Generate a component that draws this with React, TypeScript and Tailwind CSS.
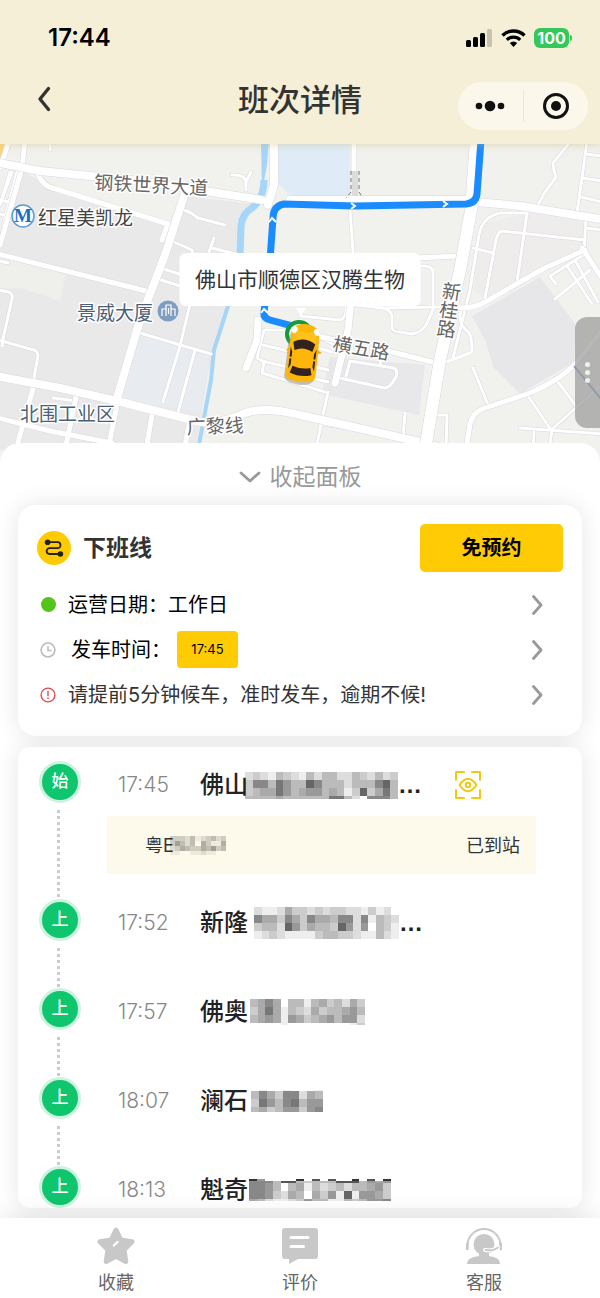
import { useState } from 'react';
import type { ReactNode } from 'react';

type MosaicRow = { h: number; tones: string };

type Stop = {
  badge: string;
  time: string;
  name: string;
  mask: MosaicRow[];
  maskClass: string;
  truncated?: boolean;
  watch?: boolean;
  bus?: boolean;
};

const stops: Stop[] = [
  {
    badge: '始',
    time: '17:45',
    name: '佛山',
    maskClass: '-ml-[3px] w-[153px]',
    truncated: true,
    watch: true,
    bus: true,
    mask: [
      { h: 8, tones: 'dcdebcdebdbbddbcdbdc' },
      { h: 8, tones: 'c88b79bb68bbbdbbb86b' },
      { h: 8, tones: 'cbaa79ba99babec6ca7b' },
      { h: 3, tones: 'bbbbabbbbbb77bdf888b' },
    ],
  },
  {
    badge: '上',
    time: '17:52',
    name: '新隆',
    maskClass: 'ml-[6px] w-[145px]',
    truncated: true,
    mask: [
      { h: 8, tones: 'deedaccdcdccddecedf' },
      { h: 8, tones: '8aac8ac8aab88d8ebcd' },
      { h: 8, tones: 'cbbd69cabbc69d9fbce' },
      { h: 8, tones: 'edcdeeeecbbccdeebde' },
    ],
  },
  {
    badge: '上',
    time: '17:57',
    name: '佛奥',
    maskClass: 'ml-[2px] w-[115px]',
    mask: [
      { h: 8, tones: 'ba8afbbebacbdac' },
      { h: 8, tones: 'ca7aebcdacbba9b' },
      { h: 8, tones: 'ba9ae9acba9b99d' },
      { h: 2, tones: 'ffffeffffffffec' },
    ],
  },
  {
    badge: '上',
    time: '18:07',
    name: '澜石',
    maskClass: 'ml-[3px] w-[72px]',
    mask: [
      { h: 1, tones: 'feffefffe' },
      { h: 8, tones: 'b8ac88dab' },
      { h: 8, tones: 'c79b87b99' },
      { h: 5, tones: 'bacb99c98' },
    ],
  },
  {
    badge: '上',
    time: '18:13',
    name: '魁奇',
    maskClass: 'ml-[1px] w-[142px]',
    mask: [
      { h: 2, tones: '39ffff3f5f5ff3f5f3' },
      { h: 2, tones: '888b55bcbbb555b9a9' },
      { h: 8, tones: '889bfbaebdcbdbba9c' },
      { h: 8, tones: '889cdabfac9e6e99ac' },
      { h: 2, tones: 'abdeedc9bbeebcb998' },
    ],
  },
];

const plateMask: MosaicRow[] = [
  { h: 5, tones: 'cccdbedcbdc' },
  { h: 5, tones: 'c9bdbfaceea' },
  { h: 5, tones: 'dcabccab9cb' },
  { h: 4, tones: 'eeffeedeeff' },
];

// '0' is the darkest tone, 'f' is fully transparent
const Mosaic = ({ rows, className }: { rows: MosaicRow[]; className: string }) => {
  const height = rows.reduce((sum, row) => sum + row.h, 0);
  const width = rows[0].tones.length * 8;
  let y = 0;

  return (
    <svg
      viewBox={`0 0 ${width} ${height}`}
      height={height}
      preserveAspectRatio="none"
      shapeRendering="crispEdges"
      className={`shrink-0 ${className}`}
      aria-hidden="true"
    >
      {rows.map((row, r) => {
        const top = y;
        y += row.h;
        return row.tones
          .split('')
          .map((tone, c) => (
            <rect
              key={`${r}-${c}`}
              x={c * 8}
              y={top}
              width={8}
              height={row.h}
              fill="#000"
              fillOpacity={1 - parseInt(tone, 16) / 15}
            />
          ));
      })}
    </svg>
  );
};

const Chevron = () => (
  <svg width="12" height="20" viewBox="0 0 12 20" fill="none">
    <path
      d="M2.5 1.5 10 10 2.5 18.5"
      stroke="#999"
      strokeWidth="2.8"
      strokeLinecap="round"
      strokeLinejoin="round"
    />
  </svg>
);

const Header = () => (
  <header className="relative z-10 bg-[#f6efd7] pb-2 shadow-[0_0_8px_rgba(200,180,110,0.5)]">
    <div className="flex h-[76px] items-center justify-between pr-7 pl-12">
      <span className="text-[24px] font-semibold text-black">17:44</span>
      <div className="flex items-center gap-2">
        <svg width="27" height="20" viewBox="0 0 27 20">
          <rect x="0" y="12" width="5" height="7" rx="1.5" fill="#000" />
          <rect x="7" y="9" width="5" height="10" rx="1.5" fill="#000" />
          <rect x="14" y="5" width="5" height="14" rx="1.5" fill="#000" />
          <rect x="21" y="1" width="5" height="18" rx="1.5" fill="#c9c3ae" />
        </svg>
        <svg width="25" height="18" viewBox="0 0 25 18" fill="none" stroke="#000">
          <path d="M1.5 6.5a15.6 15.6 0 0 1 22 0" strokeWidth="3.4" />
          <path d="M5.8 10.8a9.6 9.6 0 0 1 13.4 0" strokeWidth="3.2" />
          <path d="M12.5 18 8.8 14.1a5.3 5.3 0 0 1 7.4 0Z" fill="#000" stroke="none" />
        </svg>
        <div className="flex items-center gap-px">
          <span className="flex h-5 w-[35px] items-center justify-center rounded-[6px] bg-[#34c759] text-base font-bold text-white">
            100
          </span>
          <span className="h-[6px] w-[2px] rounded-r bg-[#34c759]" />
        </div>
      </div>
    </div>

    <div className="grid h-[60px] grid-cols-[1fr_auto_1fr] items-start px-3">
      <button aria-label="返回" className="ml-5 flex h-12 w-6 items-center justify-center">
        <svg width="16" height="28" viewBox="0 0 16 28" fill="none">
          <path
            d="M12.5 2.5 4 13 12.5 23.5"
            stroke="#333"
            strokeWidth="3.4"
            strokeLinecap="round"
            strokeLinejoin="round"
          />
        </svg>
      </button>
      <h1 className="flex h-12 items-center text-[31px] font-medium text-[#333]">
        班次详情
      </h1>
      <div className="mt-[6px] flex h-12 w-[130px] items-center justify-self-end rounded-full bg-[#fbf8eb]">
        <button aria-label="更多" className="flex flex-1 justify-center">
          <svg width="30" height="14" viewBox="0 0 30 14" fill="#111">
            <circle cx="4" cy="7" r="3.3" />
            <circle cx="15" cy="7" r="5.3" />
            <circle cx="26" cy="7" r="3.3" />
          </svg>
        </button>
        <span className="h-8 w-px bg-[#ebe7d8]" />
        <button aria-label="关闭" className="flex flex-1 justify-center">
          <svg width="28" height="28" viewBox="0 0 28 28">
            <circle cx="14" cy="14" r="11.5" fill="none" stroke="#111" strokeWidth="3" />
            <circle cx="14" cy="14" r="5" fill="#111" />
          </svg>
        </button>
      </div>
    </div>
  </header>
);

const wideRoads = [
  'M-5 162 40 171 140 181 262 200',
  'M-5 376 60 388 117 401 200 422 Q222 424 245 413 Q265 406 300 415 L420 442 450 450',
  'M184 196 165 255 140 320 115 405',
  'M274 140V185L268 205',
  'M290 200H465',
  'M474 140 470 195',
  'M476 202 520 206 600 219',
];

const midRoads = [
  'M25 140 22 168 0 245',
  'M8 144 0 168',
  'M38 174Q42 186 56 189L168 224 162 240',
  'M-2 254 146 291',
  'M585 250 545 268 485 302 Q475 308 461 308',
  'M582 248 602 278',
  'M604 328 575 364Q560 380 530 393L482 409Q472 414 470 424L466 450',
  'M354 140V170',
  'M388 351 436 363',
  'M298 332 336 340',
  'M34 385 18 442',
  'M76 397 65 450',
  'M118 400 108 450',
  'M152 415 146 450',
  'M190 420 184 450',
  'M-2 418 50 431 112 443',
  'M416 258 458 256',
];

const thinRoads = [
  'M50 144V150',
  'M12 172 0 205M17 172 3 226M10 172 2 198',
  'M0 200 14 203M0 214 12 217',
  'M180 209Q188 210 198 218L225 225',
  'M232 175Q245 174 246 182V190M246 182 251 172',
  'M172 241 192 250 194 262',
  'M161 268 182 275M158 279 180 286',
  'M214 238 209 252M212 248 236 254',
  'M0 261 8 263',
  'M-2 290 9 292Q13 294 12 299L3 339 2 346',
  'M-2 340 34 350Q38 352 38 356L34 378',
  'M140 333 211 354',
  'M191 300 180 346 163 402M195 350 178 412',
  'M53 398 76 401',
  'M350 210 355 280',
  'M300 316 340 320Q346 318 346 310V300',
  'M355 305 375 307Q391 308 392 316V328Q393 332 400 332L412 334Q422 332 426 325L433 310V272Q432 266 424 266H420',
  'M376 308 440 307',
  'M570 142 553 163 Q553 170 556 177L545 192 538 205',
  'M587 142 577 213M585 154 602 156M583 178 602 181M581 197 602 202',
  'M586 218 584 252M586 228 602 230',
  'M527 213H500Q482 217 479 235L470 290 453 358',
  'M527 213 517 282M585 240 502 231Q498 232 496 240L485 298M473 248 493 253',
  'M461 310Q458 320 464 328L468 332Q472 335 472 352 458 358 440 364',
  'M473 368 489 407',
  'M264 330H290M264 330 257 358 264 362 262 373 325 392',
  'M263 345 292 352M262 361 292 368',
  'M312 334 335 345M318 348 332 352M312 366 328 370M312 378 328 382',
  'M346 376 350 361 394 368Q400 372 394 380 390 388 384 388L340 378M381 356 380 366',
  'M328 392 321 424 316 450',
  'M321 424 404 436',
  'M405 413 403 438',
  'M437 415H447L446 450',
  'M555 378 577 407M528 396 551 430 604 383M520 428 604 434M552 430 549 450M534 432 533 450',
  'M556 284 550 276 585 254M555 299 590 270M567 266 592 304M575 260 598 302',
];

const Roads = ({ list, width }: { list: string[]; width: number }) => (
  <g fill="none" strokeLinecap="round" strokeLinejoin="round">
    {list.map((d) => (
      <path key={`edge-${d}`} d={d} stroke="#d8d8e0" strokeWidth={width + 1} />
    ))}
    {list.map((d) => (
      <path key={d} d={d} stroke="#fff" strokeWidth={width} />
    ))}
  </g>
);

const RouteMap = () => (
  <div className="relative">
    <svg
      viewBox="0 144 600 320"
      preserveAspectRatio="xMidYMin slice"
      className="h-[320px] w-full"
      role="img"
      aria-label="线路地图"
    >
      <rect x="-10" y="140" width="620" height="330" fill="#f1f1ee" />
      <path d="M20 170 58 190 170 225 185 196 252 204 238 250 226 320 208 372 196 450H-5V250Z" fill="#e9e9ea" />
      <path d="M-5 256 66 274 60 301 20 288-5 290Z" fill="#efefeb" />
      <path d="M138 332 210 354 200 412 120 399Z" fill="#e8ebef" />
      <path d="M330 357 425 365 419 415 322 394Z" fill="#e8e8eb" />
      <path d="M480 225 530 212 584 222V250L490 300 474 290Z" fill="#efecec" />
      <path d="M472 316 540 277 576 325 574 362 520 394 494 368 485 340Z" fill="#e7e7ea" />
      <path d="M-2 144H4L0 166-4 168Z" fill="#f8d679" />
      <path d="M278 140H350V197H292L279 184Z" fill="#dfecf8" />
      <path d="M261 140H269L267 165 262 192Z" fill="#a6d5fa" />
      <path
        d="M264 180Q264 198 252 208 242 214 241 226L240 256"
        fill="none"
        stroke="#a6d5fa"
        strokeWidth="7"
      />
      <path
        d="M240 250 228 306 214 350 211 380 198 450"
        fill="none"
        stroke="#a6d5fa"
        strokeWidth="4"
      />
      <Roads list={thinRoads} width={3} />
      <Roads list={midRoads} width={5} />
      <Roads list={wideRoads} width={8} />
      <Roads list={['M258 320 257 340 246 368', 'M352 290 348 330 335 383']} width={7} />
      <Roads list={['M472 205 460 270 440 360 425 450']} width={12} />
      <path d="M351 171V192L346 198M359 171V192L363 198" fill="none" stroke="#777" strokeDasharray="4 3" />
      <path d="M352 171H358V196H352Z" fill="#dcdcdf" />
      <path d="M574 366 602 400" stroke="#8ba6d2" strokeWidth="2" />

      <path
        d="M481 140 477 194Q476 203 466 204L355 206 284 204Q273 206 273 218L270 260 264 312Q263 318 270 320L300 328"
        fill="none"
        stroke="#1a8cff"
        strokeWidth="7"
        strokeLinejoin="round"
      />
      <path
        d="M351 203 355 206 351 209M443 201 447 204 443 207M269 222 272 218 276 222M261 313 264 309 268 313"
        fill="none"
        stroke="#fff"
        strokeWidth="2"
      />

      <g
        fontFamily="'Noto Sans CJK SC', sans-serif"
        fontSize="19"
        stroke="#fff"
        strokeWidth="3"
        strokeLinejoin="round"
        paintOrder="stroke"
      >
        <text x="94" y="189" fill="#666" transform="rotate(3 94 189)">
          钢铁世界大道
        </text>
        <text x="38" y="225" fill="#444">红星美凯龙</text>
        <text x="77" y="320" fill="#4b5f78">景威大厦</text>
        <text x="20" y="421" fill="#4b5f78">北围工业区</text>
        <text x="187" y="434" fill="#666" transform="rotate(-2 187 434)">
          广黎线
        </text>
        <text x="332" y="350" fill="#666" transform="rotate(10 332 350)">
          横五路
        </text>
        <text
          x="453"
          y="282"
          fill="#666"
          transform="rotate(8 453 282)"
          style={{ writingMode: 'vertical-rl' }}
        >
          新桂路
        </text>
      </g>

      <circle cx="23" cy="216" r="11" fill="#fff" stroke="#5a9bd5" strokeWidth="1.5" />
      <text
        x="23"
        y="222"
        textAnchor="middle"
        fontFamily="'Liberation Serif', serif"
        fontWeight="700"
        fontSize="19"
        fill="#1a6fbf"
      >
        M
      </text>
      <circle cx="168" cy="311" r="10.5" fill="#7f9dc0" />
      <path
        d="M162 316V309H166V316M166 316V305H171V316M171 309H175V316M168.500 308V314"
        fill="none"
        stroke="#fff"
        strokeWidth="1.2"
      />

      <circle cx="299" cy="334" r="12" fill="#fff" stroke="#159a3c" strokeWidth="4" />
      <path d="M288 340 299 356 310 340Z" fill="#159a3c" />
      <path d="M294 331H300M297 328V338" stroke="#159a3c" strokeWidth="2" />
      <path d="M296 308 301 316 306 308Z" fill="#fff" />
      <g transform="translate(303 354) rotate(7)">
        <path
          d="M-15-16Q-14-30 0-30T15-16V22Q14 29 0 29T-15 22Z"
          fill="#8a8a8a"
          opacity="0.5"
          transform="translate(-1 2)"
        />
        <path d="M-18-1-13-6H13L19-3 14-2H-14Z" fill="#e8a800" />
        <path
          d="M-14-16C-14-26-9-30 0-30S14-26 14-16L15-4V22Q14 28 0 28T-15 22V-4Z"
          fill="#ffb60a"
        />
        <path d="M-10-25Q0-18 10-25L12-12Q0-17-12-12Z" fill="#ffc21c" />
        <path d="M-11-11Q0-18 11-11L9-3Q0-8-9-3Z" fill="#33231f" />
        <path
          d="M-13-6-11-1V4H-13ZM-13 6H-11V12L-13 16ZM13-6 11-1V4H13ZM13 6H11V12L13 16Z"
          fill="#33231f"
        />
        <path d="M-9 13Q0 16 9 13L11 20Q0 24-11 20Z" fill="#33231f" />
        <ellipse cx="-11" cy="-23" rx="2.5" ry="3.5" fill="#fff" transform="rotate(30 -11 -23)" />
        <ellipse cx="11" cy="-23" rx="2.5" ry="3.5" fill="#fff" transform="rotate(-30 11 -23)" />
      </g>
    </svg>

    <div className="absolute top-[109px] left-1/2 flex h-[53px] w-[241px] -translate-x-1/2 items-center justify-center rounded-md bg-white text-[21px] whitespace-nowrap text-[#333]">
      佛山市顺德区汉腾生物
    </div>

    <button
      aria-label="展开侧栏"
      className="absolute top-[173px] right-0 flex h-[111px] w-[25px] flex-col items-center justify-center gap-[3px] rounded-l-xl bg-[#999]/70"
    >
      <span className="size-[5px] rounded-full bg-white/80" />
      <span className="size-[5px] rounded-full bg-white/80" />
      <span className="size-[5px] rounded-full bg-white/80" />
    </button>
  </div>
);

const InfoRow = ({ icon, children }: { icon: ReactNode; children: ReactNode }) => (
  <button className="flex h-[45px] w-full items-center gap-3 pr-5 pl-[3px] text-left text-[20px] text-black">
    <span className="flex w-4 justify-center">{icon}</span>
    <span className="flex flex-1 items-center">{children}</span>
    <Chevron />
  </button>
);

const LineCard = () => (
  <section className="mx-[18px] rounded-[18px] bg-white px-[19px] pt-[19px] pb-[19px] shadow-[0_0_24px_rgba(0,0,0,0.1)]">
    <div className="mb-[10px] flex items-center justify-between">
      <div className="flex items-center gap-3">
        <span className="flex size-[34px] items-center justify-center rounded-full bg-[#ffcb05]">
          <svg width="20" height="20" viewBox="0 0 20 20" fill="none">
            <path
              d="M4 4.2H13.5A3 3 0 0 1 13.5 10.2H5.5A2.9 2.9 0 0 0 5.5 16H16"
              stroke="#222"
              strokeWidth="1.8"
            />
            <circle cx="3.6" cy="4.2" r="2.8" fill="#222" />
            <circle cx="16.4" cy="16" r="2.8" fill="#222" />
          </svg>
        </span>
        <h2 className="text-[23px] font-bold text-[#333]">下班线</h2>
      </div>
      <button className="h-12 w-[143px] rounded-[5px] bg-[#ffcb05] text-[20px] font-bold text-black">
        免预约
      </button>
    </div>

    <InfoRow icon={<span className="size-[15px] rounded-full bg-[#52c41a]" />}>
      运营日期：工作日
    </InfoRow>
    <InfoRow
      icon={
        <svg width="16" height="16" viewBox="0 0 16 16" fill="none" stroke="#bbb" strokeWidth="1.5">
          <circle cx="8" cy="8" r="6.9" />
          <path d="M8 4V8.6H11.5" />
        </svg>
      }
    >
      <span className="ml-[3px]">发车时间：</span>
      <span className="ml-[6px] flex h-[37px] w-[61px] items-center justify-center rounded bg-[#ffcb05] text-[13px]">
        17:45
      </span>
    </InfoRow>
    <InfoRow
      icon={
        <svg width="16" height="16" viewBox="0 0 16 16" fill="none" stroke="#e5484d" strokeWidth="1.4">
          <circle cx="8" cy="8" r="6.9" />
          <path d="M8 4V9.2M8 10.6V12" />
        </svg>
      }
    >
      <span className="text-[#333]">请提前5分钟候车，准时发车，逾期不候!</span>
    </InfoRow>
  </section>
);

const StopItem = ({ stop, last }: { stop: Stop; last: boolean }) => (
  <li className={`flex ${last ? 'h-[42px]' : stop.bus ? 'h-[138px]' : 'h-[89px]'}`}>
    <div className="flex w-[42px] flex-col items-center">
      <span className="flex size-[42px] shrink-0 items-center justify-center rounded-full border-[3px] border-[#cdf3e0] bg-[#0fc56d] text-[17px] font-medium text-white">
        {stop.badge}
      </span>
      {!last && (
        <span className="mt-[7px] mr-[3px] w-[3px] flex-1 bg-[repeating-linear-gradient(to_bottom,#ccc_0_3px,transparent_3px_6px)]" />
      )}
    </div>
    <div className="flex-1 pr-[46px] pl-[26px]">
      <div className="flex h-12 items-center pl-[11px]">
        <time className="w-[82px] shrink-0 text-[21px] font-light text-[#888]">{stop.time}</time>
        <span className="text-[24px] font-medium whitespace-nowrap text-[#222]">{stop.name}</span>
        <Mosaic rows={stop.mask} className={stop.maskClass} />
        {stop.truncated && (
          <span className="font-['Liberation_Sans',sans-serif] text-[24px] font-bold text-[#222]">
            …
          </span>
        )}
        {stop.watch && (
          <button aria-label="关注到站" className="ml-8">
            <svg
              width="28"
              height="30"
              viewBox="0 0 28 30"
              fill="none"
              stroke="#f2c811"
              strokeWidth="2"
              strokeLinecap="round"
              strokeLinejoin="round"
            >
              <path d="M10 2H2V10M18 2H26V10M10 28H2V20M18 28H26V20" />
              <path d="M5.5 15Q14 2.5 22.5 15 14 27.500 5.5 15Z" />
              <circle cx="14" cy="15" r="2.3" />
            </svg>
          </button>
        )}
      </div>
      {stop.bus && (
        <div className="mt-[7px] flex h-[58px] items-center justify-between bg-[#fefaeb] pr-4 pl-[38px] text-[18px] text-[#333]">
          <span className="flex items-center">
            粤E
            <Mosaic rows={plateMask} className="-ml-1 w-[56px] opacity-90" />
          </span>
          <span>已到站</span>
        </div>
      )}
    </div>
  </li>
);

const TabBar = () => (
  <nav className="relative z-10 grid h-20 grid-cols-3 bg-white px-6 pt-[9px] text-[18px] text-[#666] shadow-[0_0_24px_rgba(0,0,0,0.12)]">
    <button className="flex flex-col items-center">
      <svg width="38" height="38" viewBox="0 0 38 38">
        <path
          d="M19 3 23.8 13 35 14.8 27 22.8 28.8 34.5 19 29.4 9.2 34.5 11 22.8 3 14.8 14.2 13Z"
          fill="#c8c8c8"
          stroke="#c8c8c8"
          strokeWidth="5"
          strokeLinejoin="round"
        />
        <path d="M16.8 18.5 20.5 15" stroke="#fff" strokeWidth="2.4" strokeLinecap="round" />
      </svg>
      <span className="leading-[36px]">收藏</span>
    </button>
    <button className="flex flex-col items-center">
      <svg width="38" height="38" viewBox="0 0 38 38">
        <path
          d="M4 1H34Q37 1 37 4V29Q37 32 34 32H17L8 37V32H4Q1 32 1 29V4Q1 1 4 1Z"
          fill="#c8c8c8"
        />
        <path d="M10 10.5H27M10 19.5H22.5" stroke="#fff" strokeWidth="3" strokeLinecap="round" />
      </svg>
      <span className="leading-[36px]">评价</span>
    </button>
    <button className="flex flex-col items-center">
      <svg width="38" height="38" viewBox="0 0 38 38">
        <path
          d="M2.5 22V18.5A16.5 16.5 0 0 1 35.5 18.5V22"
          fill="none"
          stroke="#c8c8c8"
          strokeWidth="2"
        />
        <path d="M1 16H3.5V23H1ZM34.5 16H37V23H34.5Z" fill="#c8c8c8" />
        <circle cx="19" cy="17.5" r="10.5" fill="#c8c8c8" />
        <path d="M14 26H24V29Q35 30 35 37H2Q2 30 14 29Z" fill="#c8c8c8" />
        <path d="M20 23Q27 24.5 33 20.5" fill="none" stroke="#fff" strokeWidth="4" strokeLinecap="round" />
        <path d="M20.5 23Q28 24.5 33 20.5" fill="none" stroke="#c8c8c8" strokeWidth="1.8" strokeLinecap="round" />
      </svg>
      <span className="leading-[36px]">客服</span>
    </button>
  </nav>
);

const App = () => {
  const [open, setOpen] = useState(true);

  return (
    <div className="flex min-h-screen flex-col bg-white font-[Inter,'Noto_Sans_CJK_SC',sans-serif]">
      <Header />
      <RouteMap />

      <main className="relative -mt-[21px] flex-1 overflow-hidden rounded-t-[20px] bg-white pb-[10px]">
        <button
          onClick={() => setOpen(!open)}
          className="flex h-[62px] w-full items-center justify-center gap-[9px] pt-[6px] text-[23px] text-[#999]"
        >
          <svg width="22" height="14" viewBox="0 0 22 14" fill="none">
            <path
              d="M2 3 11 11 20 3"
              stroke="#999"
              strokeWidth="2.8"
              strokeLinecap="round"
              strokeLinejoin="round"
            />
          </svg>
          {open ? '收起面板' : '展开面板'}
        </button>

        {open && (
          <>
            <LineCard />
            <section className="mx-[18px] mt-[11px] overflow-hidden rounded-[12px] bg-white pt-[14px] pl-[21px] shadow-[0_0_24px_rgba(0,0,0,0.1)]">
              <ol>
                {stops.map((stop, i) => (
                  <StopItem key={stop.time} stop={stop} last={i === stops.length - 1} />
                ))}
              </ol>
            </section>
          </>
        )}
      </main>

      <TabBar />
    </div>
  );
};

export default App;
